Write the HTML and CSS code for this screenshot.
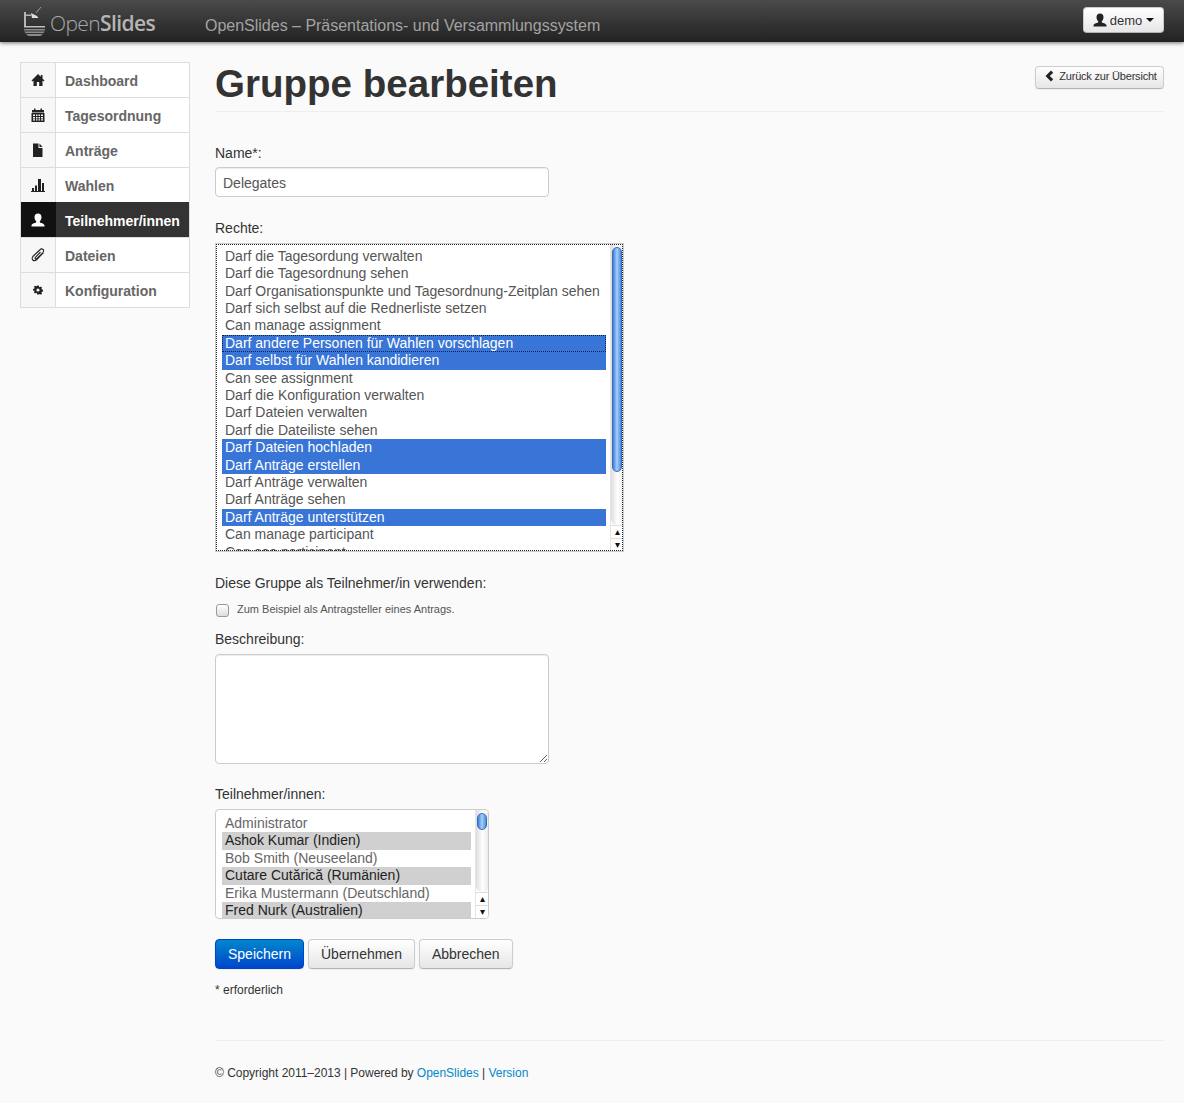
FILE: index.html
```html
<!DOCTYPE html>
<html lang="de">
<head>
  <meta charset="UTF-8">
  <title>Gruppe bearbeiten - OpenSlides</title>
  <link rel="stylesheet" href="styles.css">
</head>
<body>

<header class="navbar">
  <a class="logo" href="#">
    <svg class="logo-mark" width="24" height="30" viewBox="0 0 24 30">
      <path d="M2 6h2v15H2zM3 8.500h6v1.500H3z" fill="#b5b5b5"/>
      <path d="M9 7l6 3 1.500 2H10z" fill="#ddd"/>
      <path d="M14 7l5-6" stroke="#999" stroke-width="1" fill="none"/>
      <path d="M2 20h21v1.500H2z" fill="#c0c0c0"/>
      <path d="M2 23h21c0 3-2 5.500-4.500 7h-12C4 28.500 2 26 2 23z" fill="#8a8a8a"/>
      <path d="M2 25h21M3 27.500h19" stroke="#333" stroke-width="1"/>
    </svg>
    <span class="logo-text">Open<b>Slides</b></span>
  </a>
  <span class="tagline">OpenSlides – Präsentations- und Versammlungssystem</span>
  <button class="btn user-btn" type="button">
    <svg class="icon" width="14" height="14" viewBox="0 0 14 14"><path d="M7 0.500c2.300 0 3.500 1.600 3.500 3.700 0 1.700-.8 3.200-1.700 4v1.200c1.700.5 4.700 1.300 4.700 3v1.100H.5v-1.100c0-1.700 3-2.500 4.700-3V8.200c-.9-.8-1.700-2.300-1.700-4C3.500 2.100 4.700.5 7 .5z" fill="#222"/></svg>
    demo <span class="caret"></span>
  </button>
</header>

<div class="page">
  <nav class="sidebar">
    <a class="nav-item" href="#">
      <span class="nav-icon"><svg width="14" height="14" viewBox="0 0 14 14"><path d="M7 1L0.500 7.500l1 1L2.500 7.600V13h3.300V9h2.400v4h3.300V7.600l1 .9 1-1L11.500 5.500V2H9.800v1.800z" fill="#222"/></svg></span>
      <span class="nav-label">Dashboard</span>
    </a>
    <a class="nav-item" href="#">
      <span class="nav-icon"><svg width="14" height="14" viewBox="0 0 14 14"><path d="M1 2h2V.5h1.500V2h5V.5H11V2h2v2.500H1z" fill="#222"/><path d="M.5 5h13v9H.5zM2 6.500v1.500h2V6.500zM5 6.500v1.500h1.500V6.500zM7.500 6.500v1.500H9V6.500zM10 6.500v1.500h2V6.500zM2 9v1.500h2V9zM5 9v1.500h1.500V9zM7.500 9v1.500H9V9zM10 9v1.500h2V9zM2 11.300v1.200h2v-1.200zM5 11.300v1.200h1.500v-1.200zM7.500 11.300v1.200H9v-1.200zM10 11.300v1.200h2v-1.200z" fill="#222" fill-rule="evenodd"/></svg></span>
      <span class="nav-label">Tagesordnung</span>
    </a>
    <a class="nav-item" href="#">
      <span class="nav-icon"><svg width="14" height="14" viewBox="0 0 14 14"><path d="M2 .5h5.500V5H11.500v9H2z" fill="#222"/><path d="M8.500 .5l3 3.500h-3z" fill="#222"/></svg></span>
      <span class="nav-label">Anträge</span>
    </a>
    <a class="nav-item" href="#">
      <span class="nav-icon"><svg width="14" height="14" viewBox="0 0 14 14"><path d="M1 10h2v3H1zM4 7.500h2V13H4zM7 1h3v12H7zM11 5h2v8h-2zM0 13h14v1H0z" fill="#222"/></svg></span>
      <span class="nav-label">Wahlen</span>
    </a>
    <a class="nav-item active" href="#">
      <span class="nav-icon"><svg width="14" height="14" viewBox="0 0 14 14"><path d="M7 0.500c2.300 0 3.500 1.600 3.500 3.700 0 1.700-.8 3.200-1.700 4v1.200c1.700.5 4.700 1.300 4.700 3v1.100H.5v-1.100c0-1.700 3-2.500 4.700-3V8.200c-.9-.8-1.700-2.300-1.700-4C3.500 2.100 4.700.5 7 .5z" fill="#fff"/></svg></span>
      <span class="nav-label">Teilnehmer/innen</span>
    </a>
    <a class="nav-item" href="#">
      <span class="nav-icon"><svg width="16" height="14" viewBox="0 0 16 14"><path d="M13.500 4.500L6.800 11.500c-1.300 1.300-3 1.500-4 .5s-.8-2.700.5-4L9.700 2c1.200-1.200 2.500-1.300 3.400-.5s.7 2.200-.4 3.300L7 10.500c-.6.600-1.300.7-1.700.3s-.3-1.100.3-1.700L10.500 4" fill="none" stroke="#222" stroke-width="1.100"/></svg></span>
      <span class="nav-label">Dateien</span>
    </a>
    <a class="nav-item" href="#">
      <span class="nav-icon"><svg width="14" height="14" viewBox="0 0 14 14"><path d="M6 1.500h2l.3 1.500 1.100.5 1.300-.8 1.400 1.400-.8 1.300.5 1.100 1.500.3v2l-1.500.3-.5 1.100.8 1.300-1.400 1.400-1.300-.8-1.100.5L8 12.500H6l-.3-1.500-1.100-.5-1.300.8-1.400-1.400.8-1.300-.5-1.100L.7 7.700v-2l1.500-.3.5-1.100-.8-1.300 1.400-1.400 1.300.8 1.100-.5zM7 5a2 2 0 1 0 0 4 2 2 0 0 0 0-4z" fill="#222" fill-rule="evenodd" transform="translate(1.400 1.400) scale(.8)"/></svg></span>
      <span class="nav-label">Konfiguration</span>
    </a>
  </nav>

  <main class="content">
    <div class="page-header">
      <h1>Gruppe bearbeiten</h1>
      <a class="btn btn-small" href="#">
        <svg class="icon" width="10" height="12" viewBox="0 0 10 12"><path d="M7 .5L9.200 2.700 5.800 6l3.400 3.300L7 11.500 1.500 6z" fill="#222"/></svg>
        Zurück zur Übersicht
      </a>
    </div>

    <form>
      <label class="field-label label-name">Name*:</label>
      <input class="text-input" type="text" value="Delegates">

      <label class="field-label label-rights">Rechte:</label>
      <div class="listbox rights-box">
        <div class="listbox-items">
          <div class="opt">Darf die Tagesordung verwalten</div>
          <div class="opt">Darf die Tagesordnung sehen</div>
          <div class="opt">Darf Organisationspunkte und Tagesordnung-Zeitplan sehen</div>
          <div class="opt">Darf sich selbst auf die Rednerliste setzen</div>
          <div class="opt">Can manage assignment</div>
          <div class="opt sel cursor">Darf andere Personen für Wahlen vorschlagen</div>
          <div class="opt sel">Darf selbst für Wahlen kandidieren</div>
          <div class="opt">Can see assignment</div>
          <div class="opt">Darf die Konfiguration verwalten</div>
          <div class="opt">Darf Dateien verwalten</div>
          <div class="opt">Darf die Dateiliste sehen</div>
          <div class="opt sel">Darf Dateien hochladen</div>
          <div class="opt sel">Darf Anträge erstellen</div>
          <div class="opt">Darf Anträge verwalten</div>
          <div class="opt">Darf Anträge sehen</div>
          <div class="opt sel">Darf Anträge unterstützen</div>
          <div class="opt">Can manage participant</div>
          <div class="opt">Can see participant</div>
        </div>
        <div class="scrollbar">
          <div class="track"><div class="thumb thumb-long"></div></div>
          <div class="arrow">▴</div>
          <div class="arrow">▾</div>
        </div>
      </div>

      <label class="field-label label-use">Diese Gruppe als Teilnehmer/in verwenden:</label>
      <div class="check-row">
        <input class="checkbox" type="checkbox">
        <span class="help">Zum Beispiel als Antragsteller eines Antrags.</span>
      </div>

      <label class="field-label label-desc">Beschreibung:</label>
      <textarea class="text-area"></textarea>

      <label class="field-label label-users">Teilnehmer/innen:</label>
      <div class="listbox users-box">
        <div class="listbox-items">
          <div class="opt muted">Administrator</div>
          <div class="opt inactive">Ashok Kumar (Indien)</div>
          <div class="opt muted">Bob Smith (Neuseeland)</div>
          <div class="opt inactive">Cutare Cutărică (Rumänien)</div>
          <div class="opt muted">Erika Mustermann (Deutschland)</div>
          <div class="opt inactive">Fred Nurk (Australien)</div>
        </div>
        <div class="scrollbar">
          <div class="track"><div class="thumb thumb-short"></div></div>
          <div class="arrow">▴</div>
          <div class="arrow">▾</div>
        </div>
      </div>

      <div class="actions">
        <button class="btn btn-primary" type="button">Speichern</button>
        <button class="btn btn-large" type="button">Übernehmen</button>
        <button class="btn btn-large" type="button">Abbrechen</button>
      </div>
      <p class="required">* erforderlich</p>
    </form>

    <footer class="footer">
      © Copyright 2011–2013 | Powered by <a href="#">OpenSlides</a> | <a href="#">Version</a>
    </footer>
  </main>
</div>

</body>
</html>
```

FILE: styles.css
```css
* {
  box-sizing: border-box;
}

html, body {
  height: 1103px;
  overflow: hidden;
}

body {
  margin: 0;
  background-color: #fafafa;
  font-family: "Liberation Sans", Arial, sans-serif;
  font-size: 14px;
  color: #333;
}

a {
  text-decoration: none;
}

.navbar {
  display: flex;
  align-items: center;
  height: 42px;
  padding: 0 20px 0 22px;
  background: linear-gradient(#4a4a4a, #222);
  box-shadow: 0 1px 4px rgba(0, 0, 0, 0.55);
}

.logo {
  display: flex;
  align-items: center;
  width: 183px;
  color: #aaa;
}

.logo-text {
  margin-left: 4px;
  margin-top: 4px;
  font-family: "Open Sans", sans-serif;
  font-size: 21px;
  font-weight: 300;
  letter-spacing: -0.6px;
  color: #a8a8a8;
}

.logo-text b {
  font-weight: 600;
  color: #b5b5b5;
}

.tagline {
  flex: 1;
  margin-top: 9px;
  font-size: 16px;
  letter-spacing: -0.01px;
  color: #a3a3a3;
}

.btn {
  display: inline-flex;
  align-items: center;
  justify-content: center;
  border: 1px solid #ccc;
  border-bottom-color: #b3b3b3;
  border-radius: 4px;
  background: linear-gradient(#fff, #e6e6e6);
  font-family: inherit;
  color: #333;
  box-shadow: 0 1px 2px rgba(0, 0, 0, 0.05);
}

.user-btn {
  width: 81px;
  height: 26px;
  margin-top: -3px;
  padding: 1px 0 0;
  gap: 3px;
  font-size: 13px;
  white-space: nowrap;
}

.caret {
  width: 0;
  height: 0;
  margin: 0 0 1px 1px;
  border-top: 4px solid #111;
  border-left: 4px solid transparent;
  border-right: 4px solid transparent;
}

.page {
  display: flex;
  padding: 20px 20px 0;
}

.sidebar {
  flex: none;
  width: 170px;
  height: 246px;
  background-color: #fff;
  border: 1px solid #ddd;
}

.nav-item {
  display: flex;
  height: 35px;
  border-bottom: 1px solid #ddd;
  font-size: 14px;
  font-weight: bold;
  color: #666;
}

.nav-item:last-child {
  height: 34px;
  border-bottom: 0;
}

.nav-icon {
  display: flex;
  align-items: center;
  justify-content: center;
  flex: none;
  width: 35px;
  background-color: #f7f7f7;
  border-right: 1px solid #ddd;
}

.nav-label {
  align-self: center;
  padding-left: 9px;
  padding-top: 2px;
}

.nav-item.active {
  margin-top: -1px;
  height: 36px;
  background-color: #333;
  color: #fff;
}

.nav-item.active .nav-icon {
  background-color: #111;
  border-right-color: #111;
}

.content {
  flex: 1;
  min-width: 0;
  margin-left: 25px;
}

.page-header {
  display: flex;
  justify-content: space-between;
  height: 50px;
  border-bottom: 1px solid #eee;
}

h1 {
  margin: 0;
  font-size: 38.5px;
  line-height: 43px;
  font-weight: bold;
  letter-spacing: 0.02px;
  color: #333;
}

.btn-small {
  width: 129px;
  height: 23px;
  margin-top: 4px;
  padding: 0 0 3px 2px;
  gap: 5px;
  font-size: 11px;
  letter-spacing: -0.2px;
  color: #333;
}

.field-label {
  display: block;
  line-height: 20px;
  color: #333;
}

.label-name {
  margin-top: 31px;
  margin-bottom: 4px;
}

.text-input {
  display: block;
  width: 334px;
  height: 30px;
  padding: 5px 7px 3px;
  border: 1px solid #ccc;
  border-radius: 4px;
  background-color: #fff;
  font-family: inherit;
  font-size: 14px;
  color: #555;
  box-shadow: inset 0 1px 1px rgba(0, 0, 0, 0.075);
}

.label-rights {
  margin-top: 21px;
  margin-bottom: 5px;
}

.listbox {
  display: flex;
  overflow: hidden;
  background-color: #fff;
  font-size: 14px;
  color: #555;
}

.rights-box {
  width: 409px;
  height: 309px;
  border: 1px solid #ccc;
  outline: 1px dotted #222;
  outline-offset: -2px;
}

.users-box {
  width: 274px;
  height: 110px;
  border: 1px solid #ccc;
  border-radius: 4px;
}

.listbox-items {
  flex: 1;
  min-width: 0;
  padding: 3.8px 4px 0 6px;
}

.users-box .listbox-items {
  padding-top: 5px;
}

.opt {
  height: 17.42px;
  padding-left: 3px;
  line-height: 17.42px;
  white-space: nowrap;
}

.sel {
  background-color: #3875d7;
  color: #fff;
}

.cursor {
  outline: 1px dotted #0a1f55;
  outline-offset: -1px;
}

.inactive {
  background-color: #d0d0d0;
  color: #222;
}

.muted {
  color: #666;
}

.scrollbar {
  display: flex;
  flex-direction: column;
  flex: none;
  width: 14px;
  margin-right: -1px;
  background-color: #fff;
  border-left: 1px solid #e4e4e4;
}

.track {
  flex: 1;
  padding: 3px 2px 0 1px;
  background: linear-gradient(90deg, #ddd, #fff 50%, #e8e8e8);
  border-radius: 0 0 6px 6px;
}

.thumb {
  border-radius: 5px;
  border: 1px solid #3b6ab8;
  background: linear-gradient(90deg, #3f7ddb, #a6d0fa 50%, #4a8ae0);
}

.thumb-long {
  height: 225px;
}

.thumb-short {
  height: 17px;
}

.arrow {
  height: 13px;
  border-top: 1px solid #ddd;
  font-size: 10px;
  line-height: 12px;
  text-align: center;
  color: #111;
}

.label-use {
  margin-top: 21px;
}

.check-row {
  display: flex;
  align-items: flex-start;
  height: 24px;
  margin-top: 6px;
}

.checkbox {
  width: 13px;
  height: 13px;
  margin: 5px 8px 0 1px;
  appearance: none;
  border: 1px solid #999;
  border-radius: 3px;
  background: linear-gradient(#fff, #ddd);
}

.help {
  margin-top: 3px;
  font-size: 11px;
  line-height: 14px;
  color: #555;
}

.label-desc {
  margin-top: 6px;
  margin-bottom: 5px;
}

.text-area {
  display: block;
  width: 334px;
  height: 110px;
  border: 1px solid #ccc;
  border-radius: 4px;
  background-color: #fff;
  box-shadow: inset 0 1px 1px rgba(0, 0, 0, 0.075);
}

.label-users {
  margin-top: 20px;
  margin-bottom: 5px;
}

.actions {
  display: flex;
  gap: 4px;
  margin-top: 20px;
}

.btn-primary,
.btn-large {
  height: 30px;
  padding: 0 12px;
  font-size: 14px;
}

.btn-primary {
  width: 89px;
  border-color: #04c;
  background: linear-gradient(#08c, #04c);
  color: #fff;
}

.btn-large {
  color: #333;
}

.required {
  margin: 14px 0 0;
  font-size: 12px;
  line-height: 14px;
  color: #333;
}

.footer {
  margin-top: 43px;
  padding-top: 25px;
  border-top: 1px solid #eee;
  font-size: 12px;
  line-height: 14px;
  letter-spacing: -0.02px;
  color: #333;
}

.footer a {
  color: #08c;
}
```
